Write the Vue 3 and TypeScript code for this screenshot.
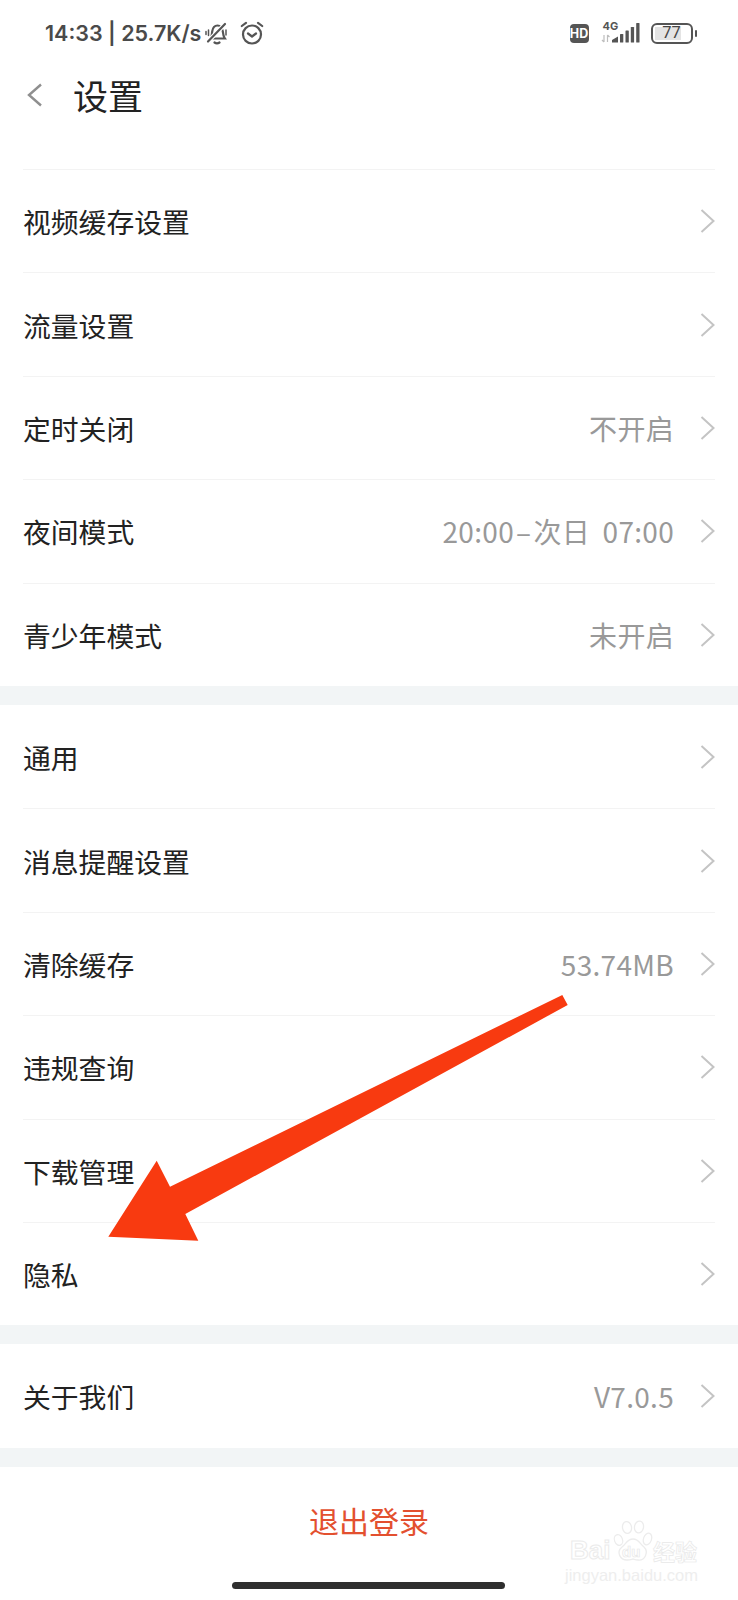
<script setup lang="ts">
interface Row { label: string; value?: string }
const sections: Row[][] = [
  [
    { label: '视频缓存设置' },
    { label: '流量设置' },
    { label: '定时关闭', value: '不开启' },
    { label: '夜间模式', value: '20:00\u200A–\u200A次日 07:00' },
    { label: '青少年模式', value: '未开启' },
  ],
  [
    { label: '通用' },
    { label: '消息提醒设置' },
    { label: '清除缓存', value: '53.74MB' },
    { label: '违规查询' },
    { label: '下载管理' },
    { label: '隐私' },
  ],
  [{ label: '关于我们', value: 'V7.0.5' }],
]
</script>

<template>
  <div class="page">
    <div class="status">
      <div class="status-left">
        <span class="time">14:33 | 25.7K/s</span>
        <svg class="bell" width="24" height="23" viewBox="0 0 24 23" fill="none" stroke="#555" stroke-width="2.200">
          <path d="M5.500 16.500c1.500-2 1.300-4.500 1.700-7C7.800 5.500 9.500 3.500 12.500 3.500s4.800 2.200 5.300 6c.3 2.800.5 5 2 7z" />
          <path d="M9.500 20.500c1.500 1 3.500 1 5 0" stroke-linecap="round" />
          <path d="M3 19.500 20 2" stroke="#fff" stroke-width="4.500" />
          <path d="M3 19.500 20 2" stroke-linecap="round" />
          <path d="M3.500 8v5.500M1 9.500v3M21 8v5" stroke-width="1.500" stroke-linecap="round" />
        </svg>
        <svg class="alarm" width="24" height="25" viewBox="0 0 24 25" fill="none" stroke="#555" stroke-width="2.200">
          <circle cx="12" cy="14.500" r="9" />
          <path d="M8 13.500l4 3 4-3" stroke-linecap="round" stroke-linejoin="round" />
          <path d="M1.800 6 6 2.800M22.200 6 18 2.800" stroke-linecap="round" />
        </svg>
      </div>
      <div class="status-right">
        <span class="hd">HD</span>
        <div class="net">
          <span class="four-g">4G</span>
          <svg class="signal" width="40" height="26" viewBox="0 0 40 26">
            <path d="M3 15v7M1 20l2 2M6.500 22v-7M6.500 15l2 2" stroke="#bdbdbd" stroke-width="1.200" fill="none" />
            <path d="M11 22.500v-2.500l6-3.500v6z" fill="#555" />
            <rect x="19" y="14" width="3.300" height="8.500" rx="0.600" fill="#555" />
            <rect x="24.500" y="10.500" width="3.300" height="12" rx="0.600" fill="#555" />
            <rect x="29.800" y="7" width="3.300" height="15.500" rx="0.600" fill="#555" />
            <rect x="35.200" y="3" width="3.300" height="19.500" rx="0.600" fill="#555" />
          </svg>
        </div>
        <div class="battery">
          <div class="cell"><span class="level"></span><span class="pct">77</span></div>
          <span class="tip"></span>
        </div>
      </div>
    </div>

    <div class="nav">
      <svg class="back" width="16" height="24" viewBox="0 0 16 24" fill="none" stroke="#8f8f8f" stroke-width="2.400">
        <path d="M14 1.500 2 12l12 10.500" />
      </svg>
      <span class="title">设置</span>
    </div>

    <div class="sections">
      <div v-for="(section, s) in sections" :key="s" class="section">
        <div v-for="row in section" :key="row.label" class="row">
          <span class="label">{{ row.label }}</span>
          <span v-if="row.value" class="value">{{ row.value }}</span>
          <svg class="chev" width="15" height="24" viewBox="0 0 15 24" fill="none" stroke="#c4c4c4" stroke-width="2">
            <path d="M1.500 1 13.500 12 1.500 23" />
          </svg>
        </div>
      </div>
    </div>

    <div class="logout-wrap"><span class="logout">退出登录</span></div>
    <div class="home-bar"></div>

    <svg class="arrow" width="738" height="1600" viewBox="0 0 738 1600">
      <polygon points="562.300,995 567.700,1005 185.300,1214 198.300,1240.700 108.300,1236.700 156.700,1160.700 170,1186.700" fill="#f83a10" />
    </svg>

    <div class="mark">
      <div class="mark-top">
        <span class="mark-bai">Bai</span>
        <div class="mark-paw">
          <svg width="40" height="43" viewBox="0 0 40 43" fill="none" stroke="#ececec" stroke-width="1.300">
            <ellipse cx="5.500" cy="20" rx="4" ry="5.500" transform="rotate(-20 5.500 20)" />
            <ellipse cx="14" cy="7.500" rx="4.500" ry="6" transform="rotate(-10 14 7.500)" />
            <ellipse cx="26" cy="7" rx="4.500" ry="6" transform="rotate(10 26 7)" />
            <ellipse cx="34.500" cy="19" rx="4" ry="6" transform="rotate(20 34.500 19)" />
            <path d="M20 19c6 0 7 5 11 8 5 5 1 14-6 13-3 0-4-1-5-1s-2 1-6 1C7 40 3 32 9 27c4-3 5-8 11-8z" />
          </svg>
          <span class="mark-du">du</span>
        </div>
        <span class="mark-cn">经验</span>
      </div>
      <div class="mark-url">jingyan.baidu.com</div>
    </div>
  </div>
</template>

<style>
html, body { margin: 0; background: #fff; }
</style>

<style scoped>
.page {
  position: relative;
  width: 738px;
  height: 1600px;
  overflow: hidden;
  background: #fff;
  font-family: "Noto Sans CJK SC", "Noto Sans", sans-serif;
  color: #222;
}
.status {
  height: 66px;
  box-sizing: border-box;
  padding: 20px 41px 0 45px;
  display: flex;
  justify-content: space-between;
  align-items: flex-start;
}
.status-left { display: flex; align-items: center; height: 26px; }
.time {
  font-family: Inter, Roboto, sans-serif;
  font-weight: 600;
  font-size: 21.500px;
  line-height: 26px;
  color: #4a4a4a;
  white-space: nowrap;
}
.bell { margin-left: 4px; }
.alarm { margin-left: 11px; margin-top: -2px; }
.status-right { display: flex; align-items: center; height: 26px; }
.hd {
  width: 19px;
  height: 19px;
  border-radius: 4px;
  background: #555;
  color: #fff;
  font: 700 12.500px/19px Inter, Roboto, sans-serif;
  text-align: center;
  margin-right: 12px;
}
.net { position: relative; width: 40px; height: 26px; margin-right: 10px; }
.four-g {
  position: absolute;
  left: 2px;
  top: 0;
  font: 700 11px/12px Inter, Roboto, sans-serif;
  color: #555;
}
.signal { position: absolute; left: 0; top: 0; }
.battery { display: flex; align-items: center; gap: 2px; }
.cell {
  position: relative;
  width: 42px;
  height: 21px;
  box-sizing: border-box;
  border: 2px solid #555;
  border-radius: 6px;
  display: flex;
  align-items: center;
  justify-content: center;
}
.level {
  position: absolute;
  left: 2px;
  top: 2px;
  bottom: 2px;
  width: 26px;
  background: #e4e4e4;
}
.pct {
  position: relative;
  font: 400 16.500px/16px Roboto, sans-serif;
  color: #444;
}
.tip { width: 2.500px; height: 7px; background: #555; border-radius: 1px; }
.nav {
  height: 64px;
  display: flex;
  align-items: center;
  padding-left: 27px;
  margin-top: -3px;
}
.back { flex: none; }
.title {
  margin-left: 30px;
  font-size: 35px;
  line-height: 46px;
  color: #222;
}
.sections { margin-top: 42px; }
.section { padding: 0 23px; }
.section + .section { border-top: 19px solid #f2f5f6; }
.row {
  height: 103.400px;
  box-sizing: border-box;
  display: flex;
  align-items: center;
  border-top: 1px solid #f3f3f3;
}
.section + .section .row:first-child { border-top: 0; }
.label { font-size: 27.800px; color: #222; flex: 1; white-space: nowrap; }
.value {
  font-size: 28px;
  color: #999;
  margin-right: 26px;
  letter-spacing: 0.300px;
  word-spacing: 6px;
  white-space: nowrap;
}
.chev { flex: none; }
.logout-wrap {
  border-top: 19px solid #f2f5f6;
  height: 106px;
  display: flex;
  align-items: center;
  justify-content: center;
}
.logout { font-size: 30px; color: #e3502f; }
.home-bar {
  position: absolute;
  left: 232px;
  top: 1582px;
  width: 273px;
  height: 7px;
  border-radius: 4px;
  background: #2f2f2f;
}
.arrow { position: absolute; left: 0; top: 0; pointer-events: none; }
.mark {
  position: absolute;
  left: 565px;
  top: 1520px;
  width: 134px;
}
.mark-top { display: flex; align-items: flex-end; height: 43px; padding-left: 5px; }
.mark-bai {
  width: 43px;
  font: 700 26px/26px "Liberation Sans", sans-serif;
  color: #fff;
  -webkit-text-stroke: 1px #ebebeb;
}
.mark-paw { position: relative; width: 40px; height: 43px; flex: none; }
.mark-du {
  position: absolute;
  left: 9px;
  top: 24px;
  font: 700 15px/15px "Liberation Sans", sans-serif;
  color: #fff;
  -webkit-text-stroke: 0.700px #e8e8e8;
}
.mark-cn {
  font: 700 22px/26px "Noto Sans CJK SC", sans-serif;
  color: #fff;
  -webkit-text-stroke: 0.700px #e8e8e8;
  white-space: nowrap;
}
.mark-url {
  margin-top: 3px;
  font: 400 16.500px/18px "Liberation Sans", sans-serif;
  color: #eeeeee;
  white-space: nowrap;
}
</style>
